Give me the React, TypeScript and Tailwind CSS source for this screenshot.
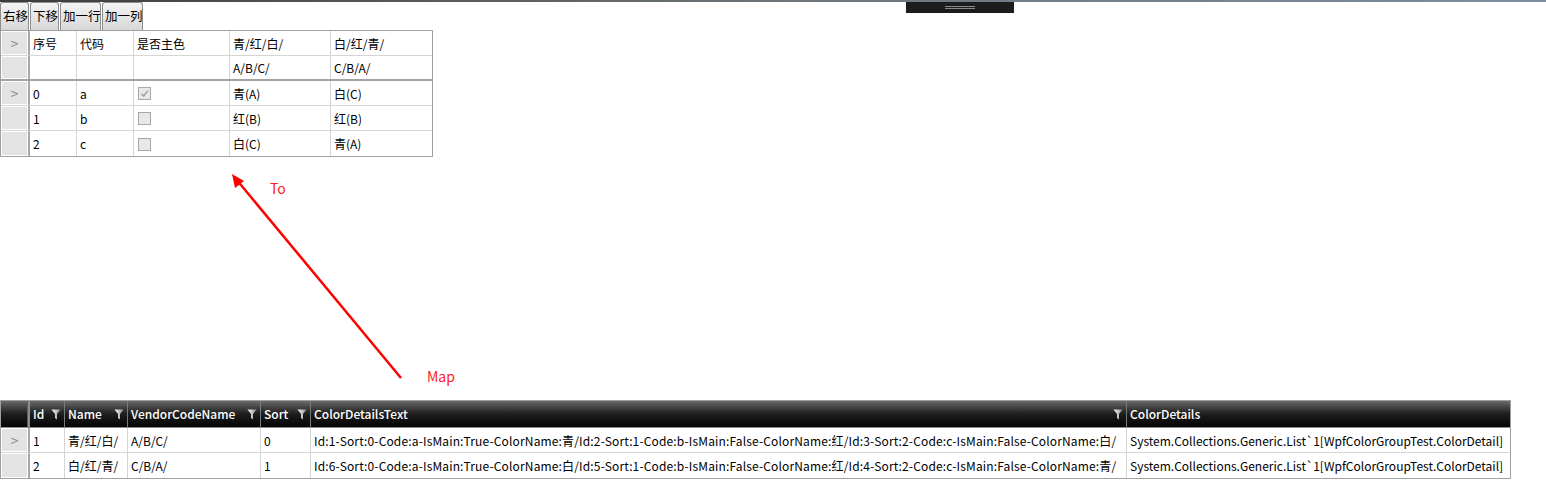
import React from 'react';

const font = { fontFamily: '"Noto Sans CJK SC", "Noto Sans", sans-serif' };

const topCols = [47, 57, 96, 101, 102];

function RowHead({ arrow, h }: { arrow?: boolean; h: string }) {
  return (
    <div className={`w-[27px] ${h} shrink-0 bg-[#e3e3e3] border border-white flex items-center justify-center text-[#8a8a8a] text-[14px]`}>
      {arrow ? '>' : ''}
    </div>
  );
}

function CheckBox({ checked }: { checked?: boolean }) {
  return (
    <div className="w-[13px] h-[13px] ml-[1px] border border-[#a8a8a8] bg-[#e8e8e8] flex items-center justify-center">
      {checked && (
        <svg width="9" height="9" viewBox="0 0 9 9">
          <path d="M1.5 4.8 L3.6 7 L7.8 1.8" stroke="#9a9a9a" strokeWidth="1.3" fill="none" />
        </svg>
      )}
    </div>
  );
}

function TopRow({ cells, arrow, last, thick }: { cells: React.ReactNode[]; arrow?: boolean; last?: boolean; thick?: boolean }) {
  return (
    <div className={`flex h-[25px] ${last ? '' : thick ? 'border-b-2 border-[#a3a3a3]' : 'border-b border-[#d5d5d5]'}`}>
      <RowHead arrow={arrow} h="h-full" />
      <div className="w-[2px] shrink-0 bg-[#a8a8a8]" />
      {cells.map((c, i) => (
        <div
          key={i}
          style={{ width: topCols[i] }}
          className={`shrink-0 flex items-center px-[3px] pt-[1px] ${i < cells.length - 1 ? 'border-r border-[#d5d5d5]' : ''}`}
        >
          {c}
        </div>
      ))}
    </div>
  );
}

const bottomCols = [35, 63, 133, 50, 816, 384];

function Funnel() {
  return (
    <svg width="10" height="11" viewBox="0 0 10 11" className="shrink-0">
      <defs>
        <linearGradient id="fg" x1="0" x2="1" y1="0" y2="0">
          <stop offset="0" stopColor="#ffffff" />
          <stop offset="1" stopColor="#8a8a8a" />
        </linearGradient>
      </defs>
      <path d="M0.5 0.5 H9.5 L6 5 V10.5 L4 9 V5 Z" fill="url(#fg)" />
    </svg>
  );
}

function BottomHeader() {
  const names = ['Id', 'Name', 'VendorCodeName', 'Sort', 'ColorDetailsText', 'ColorDetails'];
  return (
    <div className="flex h-[27px] bg-gradient-to-b from-[#6a6a6a] via-[#1e1e1e] to-[#050505] border-b border-[#8c8c8c]">
      <div className="w-[27px] shrink-0 border-r border-[#5c5c5c]" />
      <div className="w-[2px] shrink-0 bg-[#8c8c8c]" />
      {names.map((n, i) => (
        <div
          key={n}
          style={{ width: bottomCols[i] }}
          className={`shrink-0 flex items-center justify-between px-[3px] text-white font-medium ${i < names.length - 1 ? 'border-r border-[#7a7a7a]' : ''}`}
        >
          <span>{n}</span>
          {i < 5 && <Funnel />}
        </div>
      ))}
    </div>
  );
}

function BottomRow({ cells, arrow, last }: { cells: string[]; arrow?: boolean; last?: boolean }) {
  return (
    <div className={`flex h-[25px] ${last ? '' : 'border-b border-[#d5d5d5]'}`}>
      <RowHead arrow={arrow} h="h-full" />
      <div className="w-[2px] shrink-0 bg-[#a8a8a8]" />
      {cells.map((c, i) => (
        <div
          key={i}
          style={{ width: bottomCols[i] }}
          className={`shrink-0 flex items-center px-[3px] pt-[1px] whitespace-nowrap overflow-hidden ${i === 4 ? 'tracking-[0.15px]' : ''} ${i < cells.length - 1 ? 'border-r border-[#d5d5d5]' : ''}`}
        >
          {c}
        </div>
      ))}
    </div>
  );
}

export default function App() {
  const buttons = [
    { t: '右移', w: 'w-[29px]' },
    { t: '下移', w: 'w-[29px]' },
    { t: '加一行', w: 'w-[41px]' },
    { t: '加一列', w: 'w-[41px]' },
  ];
  return (
    <div className="relative w-[1546px] h-[486px] bg-white text-[12px] text-black overflow-hidden" style={font}>
      <div className="h-[2px] bg-gradient-to-r from-[#3c3c3c] via-[#6e7478] to-[#7c8ea0]" />
      <div className="absolute left-[906px] top-[2px] w-[108px] h-[11px] bg-[#1c1c1c] flex flex-col items-center justify-center gap-[1px]">
        <div className="w-[30px] h-px bg-[#8a8a8a]" />
        <div className="w-[30px] h-px bg-[#8a8a8a]" />
      </div>

      <div className="flex gap-px h-[28px] items-end">
        {buttons.map((b) => (
          <div
            key={b.t}
            className={`${b.w} h-[28px] rounded-t-[3px] border border-[#8e8e8e] border-b-0 bg-gradient-to-b from-[#f4f4f4] to-[#d8d8d8] flex items-center pl-[2px] whitespace-nowrap text-[12.5px]`}
          >
            {b.t}
          </div>
        ))}
      </div>

      <div className="w-[433px] border border-[#a0a0a0]">
        <TopRow arrow cells={['序号', '代码', '是否主色', '青/红/白/', '白/红/青/']} />
        <TopRow thick cells={['', '', '', 'A/B/C/', 'C/B/A/']} />
        <TopRow arrow cells={['0', 'a', <CheckBox checked />, '青(A)', '白(C)']} />
        <TopRow cells={['1', 'b', <CheckBox />, '红(B)', '红(B)']} />
        <TopRow last cells={['2', 'c', <CheckBox />, '白(C)', '青(A)']} />
      </div>

      <svg className="absolute left-0 top-0 pointer-events-none" width="1546" height="486">
        <line x1="401" y1="378" x2="236" y2="179" stroke="#ff0000" strokeWidth="2.5" />
        <path d="M232 174 L244 181 L235 188 Z" fill="#ff0000" />
      </svg>
      <div className="absolute left-[270px] top-[178px] text-[14px] text-[#ff2020]">To</div>
      <div className="absolute left-[427px] top-[366px] text-[14px] text-[#ff2020]">Map</div>

      <div className="mt-[243px] w-[1511px] border border-[#a0a0a0]">
        <BottomHeader />
        <BottomRow
          arrow
          cells={[
            '1',
            '青/红/白/',
            'A/B/C/',
            '0',
            'Id:1-Sort:0-Code:a-IsMain:True-ColorName:青/Id:2-Sort:1-Code:b-IsMain:False-ColorName:红/Id:3-Sort:2-Code:c-IsMain:False-ColorName:白/',
            'System.Collections.Generic.List`1[WpfColorGroupTest.ColorDetail]',
          ]}
        />
        <BottomRow
          last
          cells={[
            '2',
            '白/红/青/',
            'C/B/A/',
            '1',
            'Id:6-Sort:0-Code:a-IsMain:True-ColorName:白/Id:5-Sort:1-Code:b-IsMain:False-ColorName:红/Id:4-Sort:2-Code:c-IsMain:False-ColorName:青/',
            'System.Collections.Generic.List`1[WpfColorGroupTest.ColorDetail]',
          ]}
        />
      </div>
    </div>
  );
}
